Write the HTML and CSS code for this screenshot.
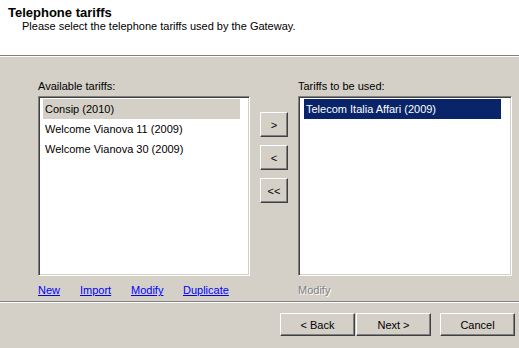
FILE: index.html
```html
<!DOCTYPE html>
<html lang="en">
<head>
    <meta charset="UTF-8">
    <title>Telephone tariffs</title>
    <link rel="stylesheet" href="styles.css">
</head>
<body>
    <div class="header">
        <div class="title">Telephone tariffs</div>
        <div class="subtitle">Please select the telephone tariffs used by the Gateway.</div>
    </div>

    <div class="content">
        <div class="column left-col">
            <div class="label">Available tariffs:</div>
            <div class="listbox">
                <div class="item item-grey">Consip (2010)</div>
                <div class="item">Welcome Vianova 11 (2009)</div>
                <div class="item">Welcome Vianova 30 (2009)</div>
            </div>
            <div class="links">
                <span class="link-cell cell-new"><a href="#">New</a></span>
                <span class="link-cell cell-import"><a href="#">Import</a></span>
                <span class="link-cell cell-modify"><a href="#">Modify</a></span>
                <span class="link-cell"><a href="#">Duplicate</a></span>
            </div>
        </div>

        <!-- pulsanti di spostamento -->
        <div class="move-buttons">
            <button class="btn btn-small">&gt;</button>
            <button class="btn btn-small">&lt;</button>
            <button class="btn btn-small">&lt;&lt;</button>
        </div>

        <div class="column right-col">
            <div class="label">Tariffs to be used:</div>
            <div class="listbox listbox-right">
                <div class="item item-selected">Telecom Italia Affari (2009)</div>
            </div>
            <div class="links">
                <span class="disabled">Modify</span>
            </div>
        </div>
    </div>

    <div class="footer">
        <button class="btn btn-wide">&lt; Back</button>
        <button class="btn btn-wide">Next &gt;</button>
        <button class="btn btn-wide btn-cancel">Cancel</button>
    </div>
</body>
</html>
```

FILE: styles.css
```css
body {
    margin: 0;
    width: 519px;
    height: 348px;
    background: #d4d0c8;
    font-family: "Liberation Sans", Arial, sans-serif;
    font-size: 11px;
    color: #000;
    overflow: hidden;
}
.header {
    background: #fff;
    height: 56px;
    border-bottom: 1px solid #808080;
    box-shadow: 0 1px 0 #fff;
    padding-left: 8px;
    box-sizing: border-box;
    padding-top: 5px;
}
.title {
    font-weight: bold;
    font-size: 13px;
    line-height: 15px;
}
.subtitle {
    padding-left: 14px;
    line-height: 13px;
}
.content {
    display: flex;
    padding: 23px 0 0 38px;
    height: 245px;
    box-sizing: border-box;
    border-bottom: 1px solid #808080;
    box-shadow: 0 1px 0 #fff;
    margin-top: 1px;
}
.left-col {
    width: 212px;
}
.right-col {
    width: 214px;
}
.label {
    line-height: 13px;
    margin-bottom: 3px;
}
.listbox {
    background: #fff;
    height: 180px;
    box-sizing: border-box;
    border-top: 1px solid #808080;
    border-left: 1px solid #808080;
    border-bottom: 1px solid #fff;
    border-right: 1px solid #fff;
    box-shadow: inset 1px 1px 0 #404040, inset -1px -1px 0 #d4d0c8;
    padding: 2px 0 0 4px;
}
.listbox-right {
    padding-left: 5px;
}
.item {
    width: 197px;
    height: 20px;
    line-height: 20px;
    padding-left: 2px;
    box-sizing: border-box;
}
.item-grey {
    background: #d4d0c8;
}
.item-selected {
    background: #0a246a;
    color: #fff;
}
.links {
    margin-top: 8px;
    line-height: 13px;
    display: flex;
}
.links a {
    color: #0000ff;
    text-decoration: underline;
}
.cell-new {
    width: 42px;
}
.cell-import {
    width: 51px;
}
.cell-modify {
    width: 52px;
}
.disabled {
    color: #808080;
    text-shadow: 1px 1px 0 #fff;
}
.move-buttons {
    display: flex;
    flex-direction: column;
    gap: 8px;
    margin: 32px 10px 0 10px;
}
.btn {
    background: #d4d0c8;
    font-family: "Liberation Sans", Arial, sans-serif;
    font-size: 11px;
    color: #000;
    padding: 0;
    margin: 0;
    border-top: 1px solid #fff;
    border-left: 1px solid #fff;
    border-right: 1px solid #404040;
    border-bottom: 1px solid #404040;
    box-shadow: inset -1px -1px 0 #808080;
}
.btn-small {
    width: 28px;
    height: 25px;
}
.footer {
    display: flex;
    padding: 11px 0 0 280px;
    gap: 1px;
}
.btn-wide {
    width: 75px;
    height: 23px;
}
.btn-cancel {
    margin-left: 8px;
}
```
